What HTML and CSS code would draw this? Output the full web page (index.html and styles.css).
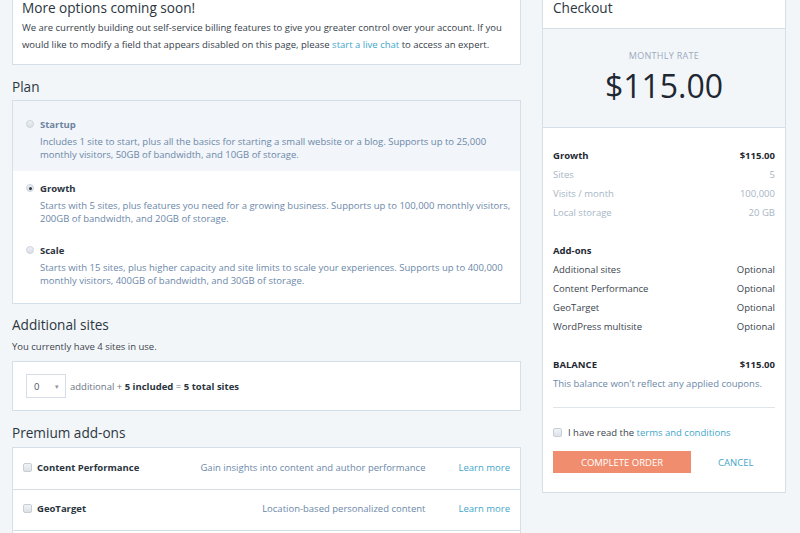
FILE: index.html
```html
<!DOCTYPE html>
<html>
<head>
<meta charset="utf-8">
<link rel="stylesheet" href="styles.css">
</head>
<body>
<div class="page">
  <main class="main">
    <section class="notice">
      <h2 class="notice-title">More options coming soon!</h2>
      <p class="notice-text">We are currently building out self-service billing features to give you greater control over your account. If you would like to modify a field that appears disabled on this page, please <a class="link">start a live chat</a> to access an expert.</p>
    </section>

    <h3 class="section-title">Plan</h3>
    <div class="box plans">
      <div class="plan plan-disabled">
        <div class="plan-head"><span class="radio"></span><span class="plan-name">Startup</span></div>
        <p class="plan-desc">Includes 1 site to start, plus all the basics for starting a small website or a blog. Supports up to 25,000 monthly visitors, 50GB of bandwidth, and 10GB of storage.</p>
      </div>
      <div class="plan">
        <div class="plan-head"><span class="radio radio-on"></span><span class="plan-name">Growth</span></div>
        <p class="plan-desc">Starts with 5 sites, plus features you need for a growing business. Supports up to 100,000 monthly visitors, 200GB of bandwidth, and 20GB of storage.</p>
      </div>
      <div class="plan">
        <div class="plan-head"><span class="radio"></span><span class="plan-name">Scale</span></div>
        <p class="plan-desc">Starts with 15 sites, plus higher capacity and site limits to scale your experiences. Supports up to 400,000 monthly visitors, 400GB of bandwidth, and 30GB of storage.</p>
      </div>
    </div>

    <h3 class="section-title title-sites">Additional sites</h3>
    <p class="sub">You currently have 4 sites in use.</p>
    <div class="box sites">
      <div class="select"><span>0</span><span class="caret">&#9662;</span></div>
      <span class="sites-text">additional + <b>5 included</b> = <b>5 total sites</b></span>
    </div>

    <h3 class="section-title title-addons">Premium add-ons</h3>
    <div class="box addons">
      <div class="addon">
        <span class="check"></span>
        <span class="addon-name">Content Performance</span>
        <span class="addon-desc">Gain insights into content and author performance</span>
        <a class="link addon-link">Learn more</a>
      </div>
      <div class="addon">
        <span class="check"></span>
        <span class="addon-name">GeoTarget</span>
        <span class="addon-desc">Location-based personalized content</span>
        <a class="link addon-link">Learn more</a>
      </div>
      <div class="addon"></div>
    </div>
  </main>

  <aside class="checkout">
    <div class="co-head">Checkout</div>
    <div class="co-rate">
      <div class="rate-label">MONTHLY RATE</div>
      <div class="rate-value">$115.00</div>
    </div>
    <div class="co-body">
      <div class="row strong"><span>Growth</span><span>$115.00</span></div>
      <div class="row muted"><span>Sites</span><span>5</span></div>
      <div class="row muted"><span>Visits / month</span><span>100,000</span></div>
      <div class="row muted"><span>Local storage</span><span>20 GB</span></div>

      <div class="row strong gap"><span>Add-ons</span></div>
      <div class="row"><span>Additional sites</span><span>Optional</span></div>
      <div class="row"><span>Content Performance</span><span>Optional</span></div>
      <div class="row"><span>GeoTarget</span><span>Optional</span></div>
      <div class="row"><span>WordPress multisite</span><span>Optional</span></div>

      <div class="row strong gap"><span>BALANCE</span><span>$115.00</span></div>
      <div class="row note">This balance won't reflect any applied coupons.</div>

      <hr class="rule">
      <div class="row terms"><span class="check"></span><span>I have read the <a class="link">terms and conditions</a></span></div>
      <div class="actions">
        <button class="btn-primary">COMPLETE ORDER</button>
        <a class="link cancel">CANCEL</a>
      </div>
    </div>
  </aside>
</div>
</body>
</html>
```

FILE: styles.css
```css
* { box-sizing: border-box; }

html, body {
  margin: 0;
  padding: 0;
  background: #f3f6f9;
  overflow: hidden;
}

body {
  font-family: "Open Sans", "Noto Sans", sans-serif;
  color: #3a444e;
  font-size: 9.5px;
}

.page {
  display: flex;
  align-items: flex-start;
  gap: 21px;
  padding-left: 12px;
  margin-top: -14px;
}

.main {
  width: 509px;
  display: flex;
  flex-direction: column;
}

.link { color: #3fa6cb; text-decoration: none; }

.box {
  background: #fff;
  border: 1px solid #d5dfe8;
}

/* notice */
.notice {
  background: #fff;
  border: 1px solid #d5dfe8;
  padding: 11px 9px 11px;
}
.notice-title {
  margin: 0;
  font-size: 13.6px;
  line-height: 20px;
  font-weight: 400;
  color: #2c3640;
}
.notice-text {
  margin: 1px 0 0;
  font-size: 9.5px;
  line-height: 17px;
  color: #36404a;
}

.section-title {
  margin: 12px 0 3px;
  font-size: 13.6px;
  line-height: 20px;
  font-weight: 400;
  color: #2c3640;
}
.title-sites { margin-top: 11px; margin-bottom: 0; }
.title-addons { margin-top: 12px; margin-bottom: 4px; }

/* plans */
.plan {
  padding: 10px 3px 8px 13px;
  background: #fff;
}
.plan:first-child { padding-top: 16px; padding-bottom: 10px; }
.plan:last-child { padding-bottom: 16px; }
.plan-disabled { background: #f2f5f9; }
.plan-head {
  display: flex;
  align-items: center;
  height: 14px;
}
.radio {
  width: 8px;
  height: 8px;
  border-radius: 50%;
  border: 1px solid #cdd4db;
  background: linear-gradient(#eef1f4, #d9dfe5);
  margin-right: 6px;
  flex: none;
  display: flex;
  align-items: center;
  justify-content: center;
}
.radio-on::after {
  content: "";
  width: 3px;
  height: 3px;
  border-radius: 50%;
  background: #2f3943;
}
.plan-name {
  font-weight: 700;
  font-size: 9.5px;
  color: #2a343e;
}
.plan-disabled .plan-name { color: #6d84a0; }
.plan-desc {
  margin: 4px 0 0 14px;
  font-size: 9.5px;
  line-height: 13px;
  color: #6b88a9;
}

/* sites */
.sub {
  margin: 5px 0 7px;
  font-size: 9.5px;
  line-height: 14px;
  color: #3a444e;
}
.sites {
  display: flex;
  align-items: center;
  padding: 12px 13px 12px;
}
.select {
  width: 40px;
  height: 24px;
  border: 1px solid #d5dde6;
  background: #fff;
  display: flex;
  align-items: center;
  justify-content: space-between;
  padding: 0 6px 0 7px;
  font-size: 9.5px;
  color: #4a545e;
  margin-right: 4px;
}
.caret { font-size: 7px; color: #8c96a0; }
.sites-text { font-size: 9.5px; color: #6a7582; }
.sites-text b { color: #2a343e; }

/* addons */
.addon {
  display: flex;
  align-items: center;
  height: 41px;
  padding: 0 10px 3px 10px;
  border-top: 1px solid #d5dfe8;
}
.addon:first-child { border-top: none; }
.check {
  width: 9px;
  height: 9px;
  border: 1px solid #c6ced6;
  border-radius: 2px;
  background: linear-gradient(#f1f3f6, #dde2e7);
  flex: none;
  margin-right: 5px;
}
.addon-name {
  flex: 1;
  font-weight: 700;
  font-size: 9.5px;
  color: #2a343e;
}
.addon-desc {
  color: #6b88a9;
  font-size: 9.5px;
}
.addon-link {
  margin-left: 33px;
  font-size: 9.5px;
}

/* checkout */
.checkout {
  width: 244px;
  background: #fff;
  border: 1px solid #d5dfe8;
}
.co-head {
  padding: 11px 10px 10px;
  font-size: 13.6px;
  line-height: 20px;
  color: #2c3640;
  border-bottom: 1px solid #d5dfe8;
}
.co-rate {
  background: #f3f6f9;
  border-bottom: 1px solid #d5dfe8;
  text-align: center;
  padding: 21px 0 21px;
}
.rate-label {
  font-size: 9px;
  line-height: 12px;
  color: #9aabbd;
  letter-spacing: 0.3px;
}
.rate-value {
  margin-top: 4px;
  font-size: 32px;
  line-height: 40px;
  color: #1e2832;
}
.co-body {
  padding: 18px 10px 19px;
}
.row {
  display: flex;
  justify-content: space-between;
  align-items: center;
  height: 19px;
  font-size: 9.5px;
  color: #3a444e;
}
.row.strong { font-weight: 700; color: #1f2933; }
.row.muted { color: #a8b6c5; }
.row.gap { margin-top: 19px; }
.row.note { color: #6b88a9; }
.rule {
  border: none;
  border-top: 1px solid #dfe5eb;
  margin: 14px 0 15px;
}
.terms { justify-content: flex-start; font-size: 9.5px; color: #3a444e; }
.terms .check { margin-right: 6px; }
.actions {
  display: flex;
  align-items: center;
  margin-top: 9px;
}
.btn-primary {
  width: 138px;
  height: 22px;
  border: none;
  background: #ef8d6e;
  color: #fff;
  font-family: inherit;
  font-size: 9.5px;
  padding: 0;
}
.cancel {
  margin-left: 27px;
  font-size: 9.5px;
}
```
